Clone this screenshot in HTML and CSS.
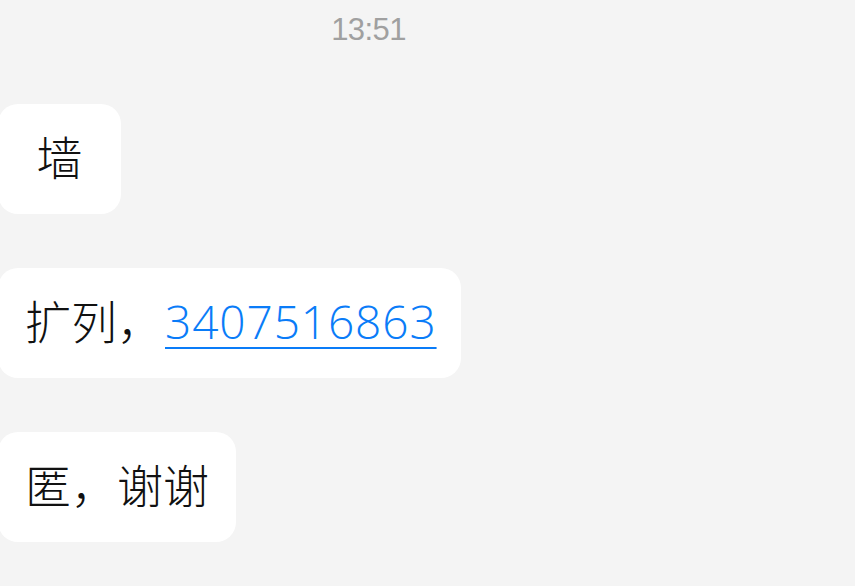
FILE: index.html
```html
<!DOCTYPE html>
<html lang="zh">
<head>
<meta charset="utf-8">
<link rel="stylesheet" href="styles.css">
</head>
<body>
<div class="chat">
  <div class="time">13:51</div>
  <div class="messages">
    <div class="bubble bubble-min">墙</div>
    <div class="bubble">扩列，<a class="link" href="#">3407516863</a></div>
    <div class="bubble">匿，谢谢</div>
  </div>
</div>
</body>
</html>
```
FILE: styles.css
```css
html, body {
  margin: 0;
  padding: 0;
  background: #f4f4f4;
}
body {
  width: 855px;
  height: 586px;
  overflow: hidden;
  font-family: "Liberation Sans", "Noto Sans CJK SC", sans-serif;
}
.chat {
  display: flex;
  flex-direction: column;
}
.time {
  padding-top: 10px;
  padding-right: 118px;
  height: 40px;
  line-height: 40px;
  text-align: center;
  font-size: 31px;
  letter-spacing: -0.6px;
  color: #a0a0a0;
}
.messages {
  display: flex;
  flex-direction: column;
  align-items: flex-start;
  gap: 54px;
  margin-top: 54px;
}
.bubble {
  margin-left: -2px;
  background: #ffffff;
  border-radius: 20px;
  padding: 24px 27px;
  font-size: 46px;
  font-weight: 300;
  line-height: 62px;
  height: 62px;
  color: #111111;
  white-space: nowrap;
}
.bubble-min {
  min-width: 69px;
  text-align: center;
}
.link {
  margin-left: 2px;
  margin-right: -3px;
  font-family: "Open Sans", "Liberation Sans", sans-serif;
  line-height: 40px;
  color: #0a7cf8;
  font-weight: 300;
  text-decoration: underline;
  text-decoration-thickness: 2px;
  text-underline-offset: 8px;
  letter-spacing: 0.9px;
}
```
